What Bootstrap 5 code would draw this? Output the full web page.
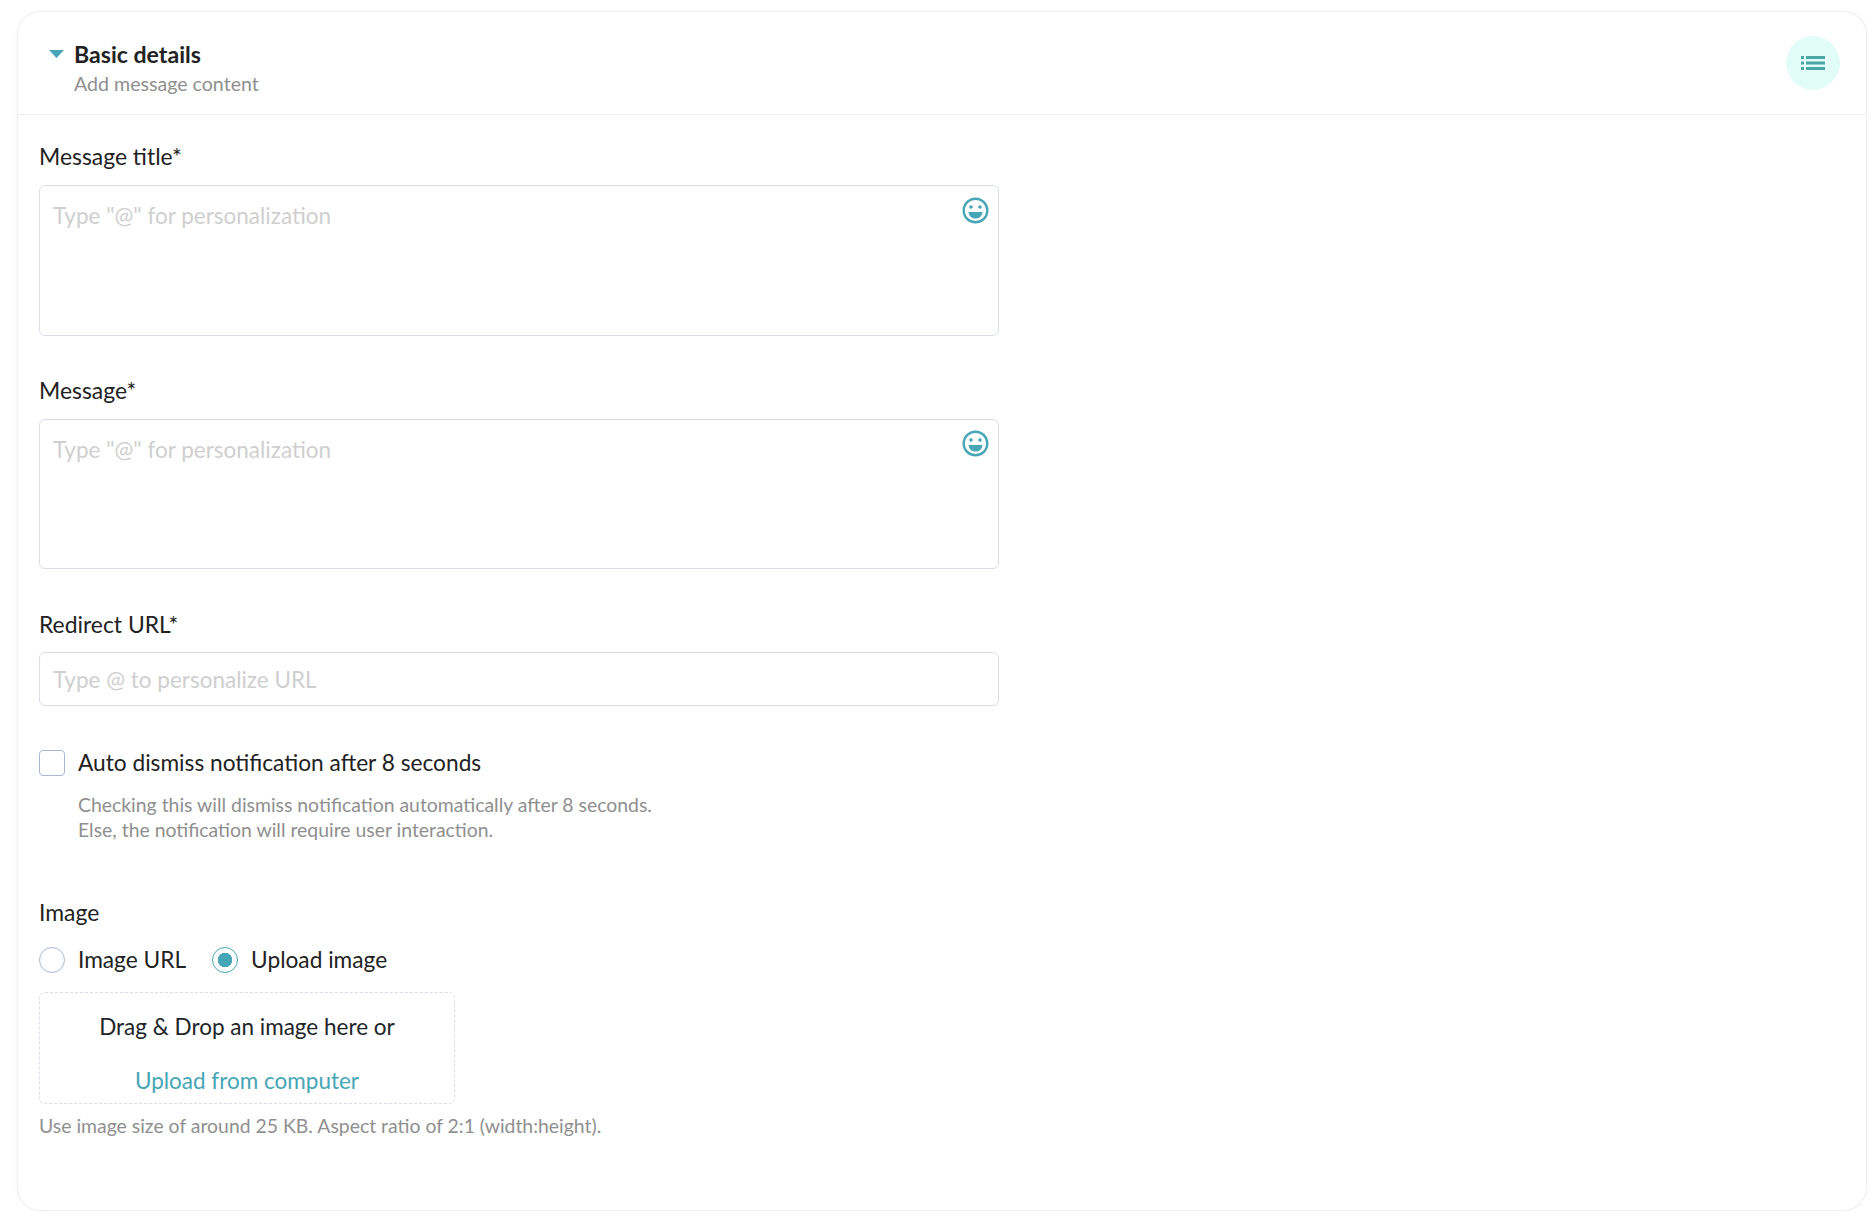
<!DOCTYPE html>
<html lang="en">
<head>
<meta charset="utf-8">
<title>Basic details</title>
<link href="https://cdn.jsdelivr.net/npm/bootstrap@5.3.0/dist/css/bootstrap.min.css" rel="stylesheet">
<style>
html,body{height:100%;background:#fff}
body{font-family:Lato,"Liberation Sans",sans-serif;color:#212529;padding:11px 5px 0 17px;overflow:hidden}
.panel{width:1850px;height:1200px;border:1px solid #eeeef5;border-radius:24px;background:#fff;box-shadow:0 0 4px rgba(60,60,110,.04)}
.panel-head{height:103px;border-bottom:1px solid #ecedf5;padding:29px 26px 0 31px}
.caret-ico{width:15px;height:8px;margin-top:9px;margin-right:10px;flex:none}
.head-title{font-size:23.100px;font-weight:700;line-height:26px;color:#222}
.head-sub{font-size:19.600px;line-height:24px;margin-top:4.500px;color:#8f8f8f}
.round-btn{width:54px;height:54px;border-radius:50%;background:#e2fcf7;border:0;margin-top:-5px;padding:0}
.panel-body{padding:0 21px}
.f-label{font-size:22.900px;line-height:26px;margin:0;color:#222}
.area-wrap{width:960px;height:151px;margin-top:16px}
.area-wrap.mid{height:150px}
.area-wrap.short{height:54px;margin-top:15px}
.f-area{width:100%;height:100%;border:1px solid #dadeea;border-radius:6px;padding:16px 13px;font-size:22.500px;line-height:28px;resize:none;box-shadow:none}
.f-area::placeholder{color:#cfcfcf}
.smile{position:absolute;top:12px;right:10px;width:27px;height:27px}
.mid .smile{top:11px}
.chk{width:26px;height:26px;border:1px solid #a9b6da;border-radius:4px;margin:0;flex:none;box-shadow:none}
.radio-i{width:26px;height:26px;border:1px solid #a9b6da;border-radius:50%;margin:0;flex:none;background:#fff}
.radio-i.on{border-color:#46a6b5;background:radial-gradient(circle,#46a6b5 0 7px,#fff 7.500px);margin-left:26px}
.opt-text{font-size:22.700px;line-height:26px;color:#222;margin-left:13px}
.hint{font-size:19.400px;line-height:25px;color:#8f8f8f}
.drop{width:416px;height:112px;border:1px dashed #d8dde9;border-radius:6px;font-size:22.500px;line-height:28px;margin-top:19px;padding-top:20px}
.drop a{color:#46a6b5;text-decoration:none;display:block;margin-top:26px}
.g1{margin-top:28px}.g2{margin-top:41px}.g3{margin-top:42px}.g4{margin-top:44px}.g5{margin-top:16px;margin-left:39px}.g6{margin-top:57px}.g7{margin-top:22px}.g8{margin-top:9px}
</style>
</head>
<body>
<div class="panel">
  <div class="panel-head d-flex justify-content-between">
    <div class="d-flex">
      <svg class="caret-ico" viewBox="0 0 15 8"><path d="M0 0H15L7.5 8Z" fill="#46a6b5"/></svg>
      <div>
        <div class="head-title">Basic details</div>
        <div class="head-sub">Add message content</div>
      </div>
    </div>
    <button class="round-btn d-flex align-items-center justify-content-center" aria-label="List">
      <svg width="24" height="14" viewBox="0 0 24 14" fill="#4ba6a5"><rect x="0" y="0" width="3" height="3"/><rect x="5" y="0" width="19" height="3"/><rect x="0" y="5.500" width="3" height="3"/><rect x="5" y="5.500" width="19" height="3"/><rect x="0" y="11" width="3" height="3"/><rect x="5" y="11" width="19" height="3"/></svg>
    </button>
  </div>
  <div class="panel-body">
    <div class="g1">
      <label class="f-label d-block">Message title*</label>
      <div class="area-wrap position-relative">
        <textarea class="form-control f-area" placeholder='Type "@" for personalization'></textarea>
        <svg class="smile" viewBox="0 0 27 27"><circle cx="13.500" cy="13.500" r="11.800" fill="none" stroke="#46a6b5" stroke-width="2.400"/><circle cx="9" cy="10" r="1.800" fill="#46a6b5"/><circle cx="18" cy="10" r="1.800" fill="#46a6b5"/><path d="M6.500 15H20.500C20 19.500 17 21.500 13.500 21.500S7 19.500 6.500 15Z" fill="#46a6b5"/></svg>
      </div>
    </div>
    <div class="g2">
      <label class="f-label d-block">Message*</label>
      <div class="area-wrap mid position-relative">
        <textarea class="form-control f-area" placeholder='Type "@" for personalization'></textarea>
        <svg class="smile" viewBox="0 0 27 27"><circle cx="13.500" cy="13.500" r="11.800" fill="none" stroke="#46a6b5" stroke-width="2.400"/><circle cx="9" cy="10" r="1.800" fill="#46a6b5"/><circle cx="18" cy="10" r="1.800" fill="#46a6b5"/><path d="M6.500 15H20.500C20 19.500 17 21.500 13.500 21.500S7 19.500 6.500 15Z" fill="#46a6b5"/></svg>
      </div>
    </div>
    <div class="g3">
      <label class="f-label d-block">Redirect URL*</label>
      <div class="area-wrap short">
        <input class="form-control f-area py-0" type="text" placeholder="Type @ to personalize URL">
      </div>
    </div>
    <div class="g4 d-flex align-items-center">
      <span class="chk d-block"></span>
      <span class="opt-text">Auto dismiss notification after 8 seconds</span>
    </div>
    <div class="g5 hint">Checking this will dismiss notification automatically after 8 seconds.<br>Else, the notification will require user interaction.</div>
    <div class="g6 f-label">Image</div>
    <div class="g7 d-flex align-items-center">
      <span class="radio-i d-block"></span>
      <span class="opt-text">Image URL</span>
      <span class="radio-i on d-block"></span>
      <span class="opt-text">Upload image</span>
    </div>
    <div class="drop text-center">
      Drag &amp; Drop an image here or
      <a href="#">Upload from computer</a>
    </div>
    <div class="g8 hint">Use image size of around 25 KB. Aspect ratio of 2:1 (width:height).</div>
  </div>
</div>
</body>
</html>
